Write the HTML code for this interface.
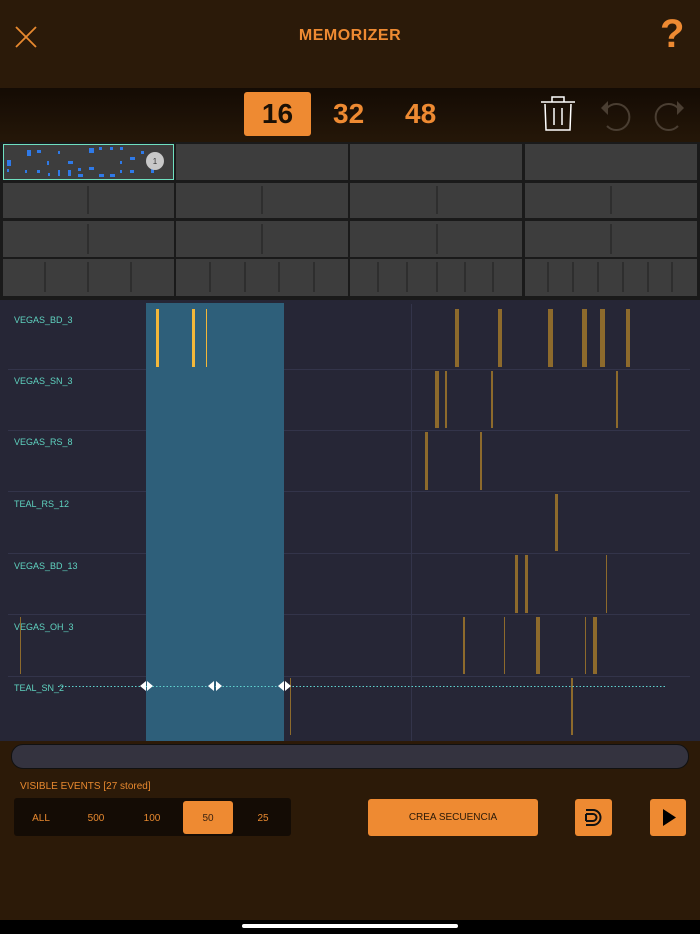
<!DOCTYPE html>
<html><head><meta charset="utf-8"><style>
*{margin:0;padding:0;box-sizing:border-box}
body{width:700px;height:934px;background:#2c1a08;position:relative;overflow:hidden;font-family:"Liberation Sans",sans-serif}
.a{position:absolute}
.cell{position:absolute;background:#3d3d3d}
.lbl{position:absolute;left:14px;color:#5fd3c0;font-size:9px}
.b{position:absolute;background:#8d6a2c}
.br{position:absolute;background:#f2b73a}
.seg{position:absolute;top:2px;height:38px;line-height:38px;width:50px;text-align:center;color:#e8892f;font-size:10px}
</style></head><body>
<div class="a" style="left:0;top:0;width:700px;height:88px;background:#2b1a09"></div>
<svg class="a" style="left:14px;top:26px" width="24" height="22"><path d="M2 1L22 21M22 1L2 21" stroke="#e8892f" stroke-width="1.8"/></svg>
<div class="a" style="left:0;width:700px;top:27px;text-align:center;color:#ee8a32;font-weight:bold;font-size:16px;letter-spacing:0.5px">MEMORIZER</div>
<div class="a" style="left:660px;top:12px;color:#ee8a32;font-weight:bold;font-size:40px">?</div>
<div class="a" style="left:0;top:88px;width:700px;height:54px;background:linear-gradient(#140b04,#251708)"></div>
<div class="a" style="left:244px;top:92px;width:67px;height:44px;background:#ee8a32;border-radius:3px;color:#1a1005;font-size:28px;font-weight:bold;text-align:center;line-height:44px">16</div>
<div class="a" style="left:333px;top:92px;color:#ee8a32;font-size:28px;font-weight:bold;line-height:44px">32</div>
<div class="a" style="left:405px;top:92px;color:#ee8a32;font-size:28px;font-weight:bold;line-height:44px">48</div>
<svg class="a" style="left:538px;top:94px" width="40" height="40"><path d="M3 8H37M14 8V3H26V8M7 10L8 36H32L33 10M16 14V31M24 14V31" stroke="#fff" stroke-width="1.5" fill="none"/></svg>
<svg class="a" style="left:597px;top:94px" width="40" height="40"><path d="M10 14A13 13 0 1 1 10 32" stroke="#4a3e32" stroke-width="2" fill="none"/><path d="M4 14L11 7V21Z" fill="#4a3e32"/></svg>
<svg class="a" style="left:648px;top:94px" width="40" height="40"><path d="M30 14A13 13 0 1 0 30 32" stroke="#4a3e32" stroke-width="2" fill="none"/><path d="M36 14L29 7V21Z" fill="#4a3e32"/></svg>
<div class="a" style="left:0;top:142px;width:700px;height:158px;background:#1a1a1a"></div>
<div class="cell" style="left:3px;top:144px;width:171px;height:36px;border:1.5px solid #6fe0c0"></div>
<div class="cell" style="left:176px;top:144px;width:172px;height:36px"></div>
<div class="cell" style="left:350px;top:144px;width:172px;height:36px"></div>
<div class="cell" style="left:525px;top:144px;width:172px;height:36px"></div>
<div class="cell" style="left:3px;top:183px;width:171px;height:35px"></div>
<div class="cell" style="left:176px;top:183px;width:172px;height:35px"></div>
<div class="cell" style="left:350px;top:183px;width:172px;height:35px"></div>
<div class="cell" style="left:525px;top:183px;width:172px;height:35px"></div>
<div class="cell" style="left:3px;top:221px;width:171px;height:36px"></div>
<div class="cell" style="left:176px;top:221px;width:172px;height:36px"></div>
<div class="cell" style="left:350px;top:221px;width:172px;height:36px"></div>
<div class="cell" style="left:525px;top:221px;width:172px;height:36px"></div>
<div class="cell" style="left:3px;top:259px;width:171px;height:37px"></div>
<div class="cell" style="left:176px;top:259px;width:172px;height:37px"></div>
<div class="cell" style="left:350px;top:259px;width:172px;height:37px"></div>
<div class="cell" style="left:525px;top:259px;width:172px;height:37px"></div>
<svg class="a" style="left:0;top:142px" width="700" height="158">
<g stroke="#1e1e1e" stroke-width="1">
<path d="M88 44V72M262 44V72M437 44V72M611 44V72M88 82V112M262 82V112M437 82V112M611 82V112"/>
<path d="M45 120V150M88 120V150M131 120V150M210 120V150M245 120V150M279 120V150M314 120V150M378 120V150M407 120V150M437 120V150M465 120V150M493 120V150M548 120V150M573 120V150M598 120V150M623 120V150M648 120V150M672 120V150"/>
</g>
<g fill="#2f7ae8">
<rect x="27" y="8" width="4" height="6"/><rect x="37" y="8" width="4" height="3"/><rect x="58" y="9" width="2" height="3"/><rect x="89" y="6" width="5" height="5"/><rect x="99" y="5" width="3" height="3"/><rect x="110" y="5" width="3" height="3"/><rect x="120" y="5" width="3" height="3"/><rect x="141" y="9" width="3" height="3"/><rect x="7" y="18" width="4" height="6"/><rect x="47" y="19" width="2" height="4"/><rect x="68" y="19" width="5" height="3"/><rect x="120" y="19" width="2" height="3"/><rect x="130" y="15" width="5" height="3"/><rect x="7" y="27" width="2" height="3"/><rect x="25" y="28" width="2" height="3"/><rect x="37" y="28" width="3" height="3"/><rect x="48" y="31" width="2" height="3"/><rect x="58" y="28" width="2" height="6"/><rect x="68" y="28" width="3" height="6"/><rect x="78" y="26" width="3" height="3"/><rect x="89" y="25" width="5" height="3"/><rect x="78" y="32" width="5" height="3"/><rect x="99" y="32" width="5" height="3"/><rect x="110" y="32" width="5" height="3"/><rect x="120" y="28" width="2" height="3"/><rect x="130" y="28" width="4" height="3"/><rect x="151" y="26" width="3" height="5"/>
</g>
<circle cx="155" cy="19" r="9" fill="#c8c8c8"/><text x="155" y="22" font-size="8" text-anchor="middle" fill="#333" font-family="Liberation Sans">1</text>
</svg>
<div class="a" style="left:0;top:300px;width:700px;height:441px;background:#262636"></div>
<svg class="a" style="left:0;top:300px" width="700" height="441">
<g stroke="#33344a" stroke-width="1"><path d="M8 69.5H690M8 130.5H690M8 191.5H690M8 253.5H690M8 314.5H690M8 376.5H690"/><path d="M411.5 4V441"/></g>
</svg>
<div class="a" style="left:146px;top:303px;width:138px;height:438px;background:#2e5f7a"></div>
<div class="lbl" style="top:315px">VEGAS_BD_3</div>
<div class="lbl" style="top:376px">VEGAS_SN_3</div>
<div class="lbl" style="top:437px">VEGAS_RS_8</div>
<div class="lbl" style="top:499px">TEAL_RS_12</div>
<div class="lbl" style="top:561px">VEGAS_BD_13</div>
<div class="lbl" style="top:622px">VEGAS_OH_3</div>
<div class="lbl" style="top:683px">TEAL_SN_2</div>
<div class="br" style="left:156px;top:309px;width:3px;height:58px"></div>
<div class="br" style="left:192px;top:309px;width:3px;height:58px"></div>
<div class="br" style="left:206px;top:309px;width:1px;height:58px"></div>
<div class="b" style="left:455px;top:309px;width:4px;height:58px"></div>
<div class="b" style="left:498px;top:309px;width:4px;height:58px"></div>
<div class="b" style="left:548px;top:309px;width:5px;height:58px"></div>
<div class="b" style="left:582px;top:309px;width:5px;height:58px"></div>
<div class="b" style="left:600px;top:309px;width:5px;height:58px"></div>
<div class="b" style="left:626px;top:309px;width:4px;height:58px"></div>
<div class="b" style="left:435px;top:371px;width:4px;height:57px"></div>
<div class="b" style="left:445px;top:371px;width:2px;height:57px"></div>
<div class="b" style="left:491px;top:371px;width:2px;height:57px"></div>
<div class="b" style="left:616px;top:371px;width:2px;height:57px"></div>
<div class="b" style="left:425px;top:432px;width:3px;height:58px"></div>
<div class="b" style="left:480px;top:432px;width:2px;height:58px"></div>
<div class="b" style="left:555px;top:494px;width:3px;height:57px"></div>
<div class="b" style="left:515px;top:555px;width:3px;height:58px"></div>
<div class="b" style="left:525px;top:555px;width:3px;height:58px"></div>
<div class="b" style="left:606px;top:555px;width:1px;height:58px"></div>
<div class="b" style="left:20px;top:617px;width:1px;height:57px"></div>
<div class="b" style="left:463px;top:617px;width:2px;height:57px"></div>
<div class="b" style="left:504px;top:617px;width:1px;height:57px"></div>
<div class="b" style="left:536px;top:617px;width:4px;height:57px"></div>
<div class="b" style="left:585px;top:617px;width:1px;height:57px"></div>
<div class="b" style="left:593px;top:617px;width:4px;height:57px"></div>
<div class="b" style="left:290px;top:678px;width:1px;height:57px"></div>
<div class="b" style="left:571px;top:678px;width:2px;height:57px"></div>
<svg class="a" style="left:0;top:678px" width="700" height="20">
<path d="M58 8.5H665" stroke="#5fd3d0" stroke-width="1" stroke-dasharray="1.5 2"/>
<g fill="#fff"><path d="M140 8L146 3V13ZM147 3L153 8L147 13Z"/><path d="M208 8L214 3V13ZM216 3L222 8L216 13Z"/><path d="M278 8L284 3V13ZM285 3L291 8L285 13Z"/></g>
</svg>
<div class="a" style="left:11px;top:744px;width:678px;height:25px;background:#34333f;border:1.5px solid #111;border-radius:12px"></div>
<div class="a" style="left:20px;top:781px;color:#e8892f;font-size:10px">VISIBLE EVENTS [27 stored]</div>
<div class="a" style="left:14px;top:798px;width:277px;height:38px;background:#140c05;border-radius:3px">
<div class="seg" style="left:2px">ALL</div>
<div class="seg" style="left:57px">500</div>
<div class="seg" style="left:113px">100</div>
<div class="a" style="left:169px;top:3px;width:50px;height:33px;background:#ee8a32;border-radius:3px"></div>
<div class="seg" style="left:169px;color:#3a2210">50</div>
<div class="seg" style="left:224px">25</div>
</div>
<div class="a" style="left:368px;top:799px;width:170px;height:37px;background:#ee8a32;border-radius:3px;text-align:center;line-height:37px;font-size:10px;color:#2a1a08">CREA SECUENCIA</div>
<div class="a" style="left:575px;top:799px;width:37px;height:37px;background:#ee8a32;border-radius:3px"></div>
<svg class="a" style="left:575px;top:799px" width="37" height="37"><path d="M11 11H18A7 7 0 0 1 18 26H11M11 15H18A3.5 3.5 0 0 1 18 22H11" stroke="#111" stroke-width="2" fill="none"/><path d="M11 15V22" stroke="#111" stroke-width="2"/></svg>
<div class="a" style="left:650px;top:799px;width:36px;height:37px;background:#ee8a32;border-radius:3px"></div>
<svg class="a" style="left:650px;top:799px" width="36" height="37"><path d="M13 10L26 18.5L13 27Z" fill="#000"/></svg>
<div class="a" style="left:0;top:920px;width:700px;height:14px;background:#000"></div>
<div class="a" style="left:242px;top:924px;width:216px;height:4px;background:#fff;border-radius:2px"></div>
</body></html>
